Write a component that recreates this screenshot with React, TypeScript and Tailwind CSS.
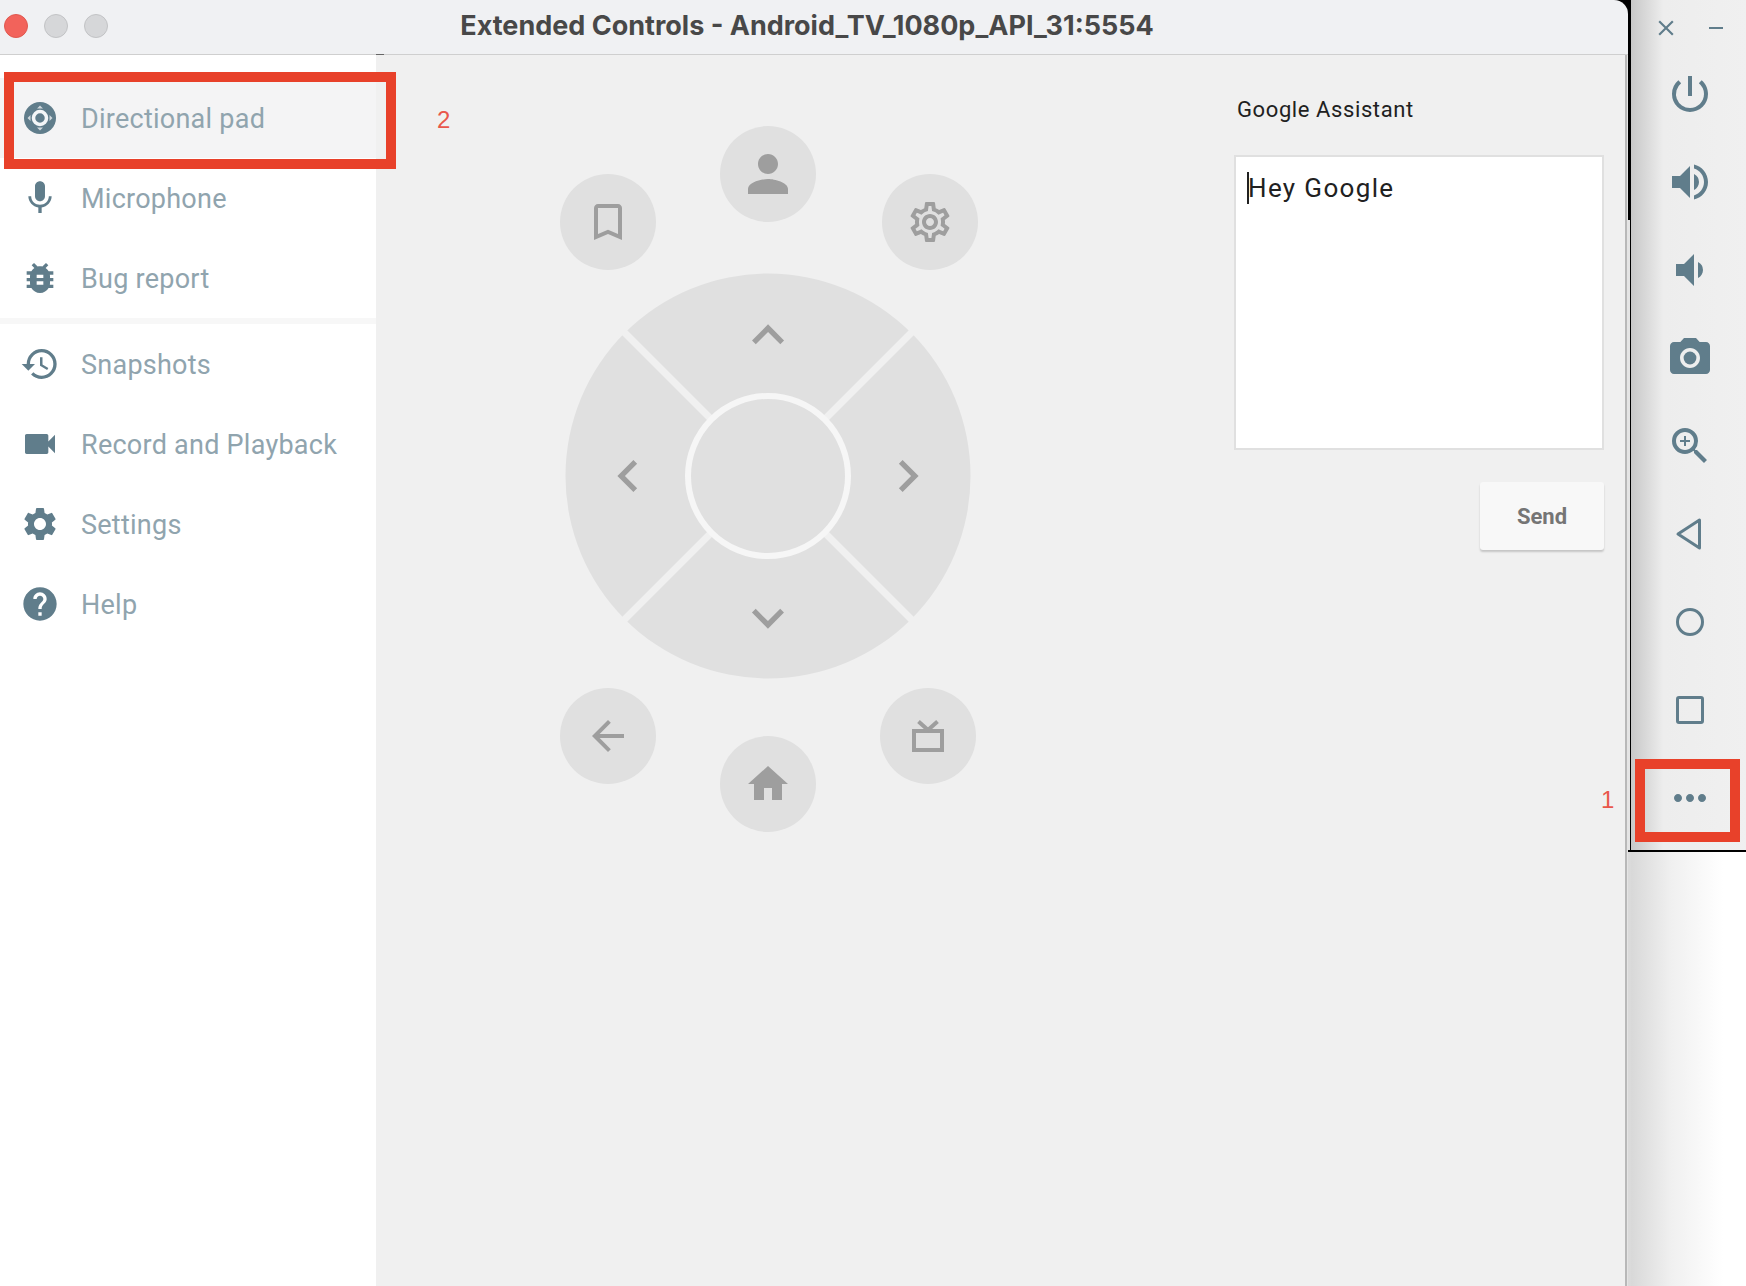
import React from 'react';
import {
  MdArrowBack,
  MdBookmarkBorder,
  MdBugReport,
  MdClose,
  MdHelp,
  MdHistory,
  MdHome,
  MdMic,
  MdMoreHoriz,
  MdOutlineSettings,
  MdPerson,
  MdPhotoCamera,
  MdPowerSettingsNew,
  MdRemove,
  MdSettings,
  MdVideocam,
  MdVolumeDown,
  MdVolumeUp,
  MdZoomIn,
} from 'react-icons/md';

const DpadIcon = () => (
  <svg width="32" height="32" viewBox="0 0 32 32">
    <circle cx="16" cy="16" r="16" fill="#607d8b" />
    <circle cx="16" cy="16" r="6.5" fill="none" stroke="#f4f6f7" strokeWidth="3.5" />
    <path d="M16 3.5l3 3h-6zM16 28.5l3-3h-6zM3.5 16l3-3v6zM28.5 16l-3-3v6z" fill="#cfd8dc" />
  </svg>
);

const TvIcon = () => (
  <svg width="32" height="32" viewBox="0 0 32 32" fill="none" stroke="#9e9e9e">
    <rect x="2" y="11" width="28" height="19" strokeWidth="4" />
    <path d="M6.5 1.5L16 10l9.5-8.5" strokeWidth="4" />
  </svg>
);

const BackIcon = () => (
  <svg width="32" height="36" viewBox="0 0 32 36" fill="none" stroke="#607d8b" strokeWidth="3">
    <path d="M25.5 4v28L4 18z" strokeLinejoin="round" />
  </svg>
);

const CircleIcon = () => (
  <svg width="32" height="32" viewBox="0 0 32 32" fill="none" stroke="#607d8b" strokeWidth="3">
    <circle cx="16" cy="16" r="12.5" />
  </svg>
);

const SquareIcon = () => (
  <svg width="32" height="32" viewBox="0 0 32 32" fill="none" stroke="#607d8b" strokeWidth="3">
    <rect x="3.5" y="3.5" width="25" height="25" rx="1.5" />
  </svg>
);

const navTop = [
  { label: 'Directional pad', icon: <DpadIcon />, active: true },
  { label: 'Microphone', icon: <MdMic size={40} /> },
  { label: 'Bug report', icon: <MdBugReport size={40} /> },
];

const navBottom = [
  { label: 'Snapshots', icon: <MdHistory size={40} /> },
  { label: 'Record and Playback', icon: <MdVideocam size={40} /> },
  { label: 'Settings', icon: <MdSettings size={40} /> },
  { label: 'Help', icon: <MdHelp size={40} /> },
];

const NavItem = ({ label, icon, active }: { label: string; icon: React.ReactNode; active?: boolean }) => (
  <div className={`flex h-20 items-center ${active ? 'bg-[#f4f4f5]' : ''}`}>
    <div className="flex w-20 shrink-0 items-center justify-center text-[#607d8b]">{icon}</div>
    <span className="pl-[1px] pt-[2px] text-[27px] leading-none tracking-[0.25px] text-[#90a4ae]">{label}</span>
  </div>
);

const RoundButton = ({ className, children }: { className: string; children: React.ReactNode }) => (
  <div className={`absolute flex h-24 w-24 items-center justify-center rounded-full bg-[#e0e0e0] text-[#9e9e9e] ${className}`}>
    {children}
  </div>
);

const chevron = 'M7.41 15.41L12 10.83l4.59 4.58L18 14l-6-6-6 6z';

// the four wedges and the ring of the d-pad, center at 204,204 in the svg
const DpadRing = () => (
  <svg width="408" height="408" viewBox="0 0 408 408">
    <circle cx="204" cy="204" r="202.5" fill="#e0e0e0" />
    <path d="M60 60L348 348M348 60L60 348" stroke="#f0f0f0" strokeWidth="7" />
    <circle cx="204" cy="204" r="80" fill="#e0e0e0" stroke="#f6f6f6" strokeWidth="6" />
    <g fill="#9e9e9e">
      <path d={chevron} transform="translate(172 31) scale(2.67)" />
      <path d={chevron} transform="translate(236 378) rotate(180) scale(2.67)" />
      <path d={chevron} transform="translate(32 236) rotate(-90) scale(2.67)" />
      <path d={chevron} transform="translate(376 172) rotate(90) scale(2.67)" />
    </g>
  </svg>
);

const toolbarIcons = [
  <MdPowerSettingsNew size={48} />,
  <MdVolumeUp size={48} />,
  <MdVolumeDown size={48} />,
  <MdPhotoCamera size={48} />,
  <MdZoomIn size={48} />,
  <BackIcon />,
  <CircleIcon />,
  <SquareIcon />,
  <MdMoreHoriz size={48} />,
];

export default function App() {
  return (
    <div className="relative flex h-[1286px] w-[1746px] overflow-hidden bg-white font-['Roboto',sans-serif]">
      {/* extended controls window */}
      <div className="flex w-[1628px] shrink-0 flex-col bg-[#e4e4e4]">
        <div className="shrink-0 bg-black">
          <div className="relative flex h-[55px] items-center justify-center rounded-tr-[14px] border-b-[1px] border-[#cfcfcf] bg-[#f0f1f3] pb-[3px] pr-[14px]">
            <div className="absolute left-1 top-[14px] flex gap-4">
              <span className="h-6 w-6 rounded-full border border-[#e0584f] bg-[#f2635b]" />
              <span className="h-6 w-6 rounded-full border border-[#c2c3c5] bg-[#d6d7d9]" />
              <span className="h-6 w-6 rounded-full border border-[#c2c3c5] bg-[#d6d7d9]" />
            </div>
            <h1 className="font-['Inter',sans-serif] text-[27px] leading-none font-bold text-[#484848]">
              Extended Controls - Android_TV_1080p_API_31:5554
            </h1>
            <span className="absolute bottom-[-1px] left-[376px] h-px w-2 bg-[#666666]" />
          </div>
        </div>

        <div className="mr-px flex min-h-0 flex-1 border-r-2 border-[#b8b8b8]">
          <aside className="w-[376px] shrink-0 bg-white pt-[23px]">
            {navTop.map((item) => (
              <NavItem key={item.label} {...item} />
            ))}
            <div className="h-[6px] bg-[#f7f7f7]" />
            {navBottom.map((item) => (
              <NavItem key={item.label} {...item} />
            ))}
          </aside>

          <main className="flex min-w-0 flex-1 bg-[#f0f0f0]">
            {/* remote */}
            <div className="relative ml-[184px] mt-[71px] h-[708px] w-[424px] shrink-0">
              <RoundButton className="left-0 top-[48px]">
                <MdBookmarkBorder size={48} />
              </RoundButton>
              <RoundButton className="left-[160px] top-0">
                <MdPerson size={60} />
              </RoundButton>
              <RoundButton className="left-[322px] top-[48px]">
                <MdOutlineSettings size={48} />
              </RoundButton>
              <div className="absolute left-[4px] top-[146px]">
                <DpadRing />
              </div>
              <RoundButton className="left-0 top-[562px]">
                <MdArrowBack size={48} />
              </RoundButton>
              <RoundButton className="left-[160px] top-[610px]">
                <MdHome size={48} />
              </RoundButton>
              <RoundButton className="left-[320px] top-[562px]">
                <TvIcon />
              </RoundButton>
            </div>

            {/* assistant */}
            <div className="ml-[250px] flex w-[370px] shrink-0 flex-col pt-[42px]">
              <div className="pl-[3px] text-[22px] leading-[26px] tracking-[0.6px] text-[#212121]">Google Assistant</div>
              <div className="mt-[32px] h-[295px] border-2 border-[#e0e0e0] bg-white pl-[11px] pt-[15px]">
                <div className="flex items-center">
                  <span className="h-8 w-[2px] bg-[#212121]" />
                  <span className="-ml-px text-[26px] leading-8 tracking-[1.35px] text-[#212121]">Hey Google</span>
                </div>
              </div>
              <button className="mt-[32px] ml-[246px] h-[68px] w-[124px] rounded-[3px] bg-[#f8f8f8] text-[22px] font-bold text-[#757575] shadow-[0_2px_2px_rgba(0,0,0,0.18)]">
                Send
              </button>
            </div>
          </main>
        </div>
      </div>

      {/* seam between the window and the toolbar */}
      <div className="flex w-[3px] shrink-0 flex-col">
        <div className="h-[220px] bg-black" />
        <div className="h-[632px] border-r border-b-2 border-black bg-[#e4e4e4]" />
        <div className="flex-1 bg-[#dadada]" />
      </div>

      {/* emulator toolbar */}
      <div className="flex min-w-0 flex-1 flex-col bg-gradient-to-r from-[#d8d8d8] via-[#f0f0f0] via-[35%] to-white to-[80%]">
        <div className="h-[852px] shrink-0 border-b-2 border-black bg-gradient-to-r from-[#c8c8c8] via-[#ededed] via-[28%] to-[#f0f0f0] pl-[3px] text-[#607d8b]">
          <div className="flex h-[50px] items-center pl-[19px] pt-[6px]">
            <MdClose size={26} />
            <MdRemove size={24} className="ml-[25px]" />
          </div>
          {toolbarIcons.map((icon, i) => (
            <div key={i} className="flex h-[88px] items-center justify-center">
              {icon}
            </div>
          ))}
        </div>
      </div>

      {/* tutorial annotations */}
      <div className="absolute left-[4px] top-[72px] h-[97px] w-[392px] border-[10px] border-[#e8412a]" />
      <span className="absolute left-[437px] top-[106px] text-[24px] leading-[28px] text-[#e9574b] font-['Liberation_Sans',sans-serif]">2</span>
      <div className="absolute left-[1635px] top-[759px] h-[83px] w-[105px] border-[10px] border-[#e8412a]" />
      <span className="absolute left-[1601px] top-[786px] text-[24px] leading-[28px] text-[#e9574b] font-['Liberation_Sans',sans-serif]">1</span>
    </div>
  );
}
